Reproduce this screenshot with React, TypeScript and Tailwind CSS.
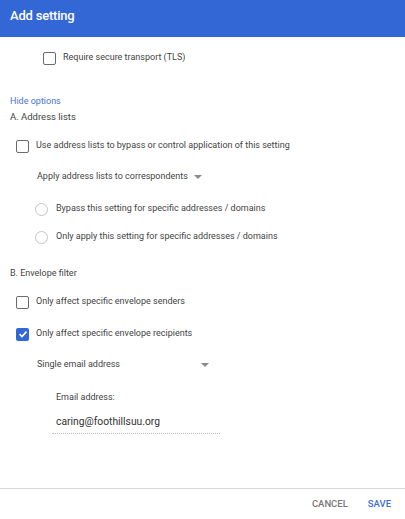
// Add setting dialog
const font = { fontFamily: 'Roboto, "Liberation Sans", Arial, sans-serif' };

function Checkbox({ checked = false }: { checked?: boolean }) {
  if (checked) {
    return (
      <span className="w-[13px] h-[13px] rounded-[2px] bg-[#3367d6] flex items-center justify-center shrink-0">
        <svg width="10" height="10" viewBox="0 0 10 10">
          <path d="M1.6 5.2 L4 7.5 L8.5 2.6" fill="none" stroke="white" strokeWidth="1.6" />
        </svg>
      </span>
    );
  }
  return <span className="w-[13px] h-[13px] rounded-[2px] border-[1.5px] border-[#6b6b6b] shrink-0" />;
}

function Radio() {
  return <span className="w-[13px] h-[13px] rounded-full border-[1.5px] border-[#c4c4c4] shrink-0" />;
}

function Caret() {
  return <span className="w-0 h-0 border-l-[4px] border-r-[4px] border-t-[4px] border-l-transparent border-r-transparent border-t-[#8a8a8a]" />;
}

export default function App() {
  return (
    <div className="w-[405px] h-[519px] bg-white flex flex-col text-[#444] text-[9px]" style={font}>
      <div className="h-[37px] bg-[#3367d6] flex items-center pl-[10px] pb-[6px] shrink-0">
        <span className="text-white text-[13px] font-medium tracking-[-0.2px]">Add setting</span>
      </div>

      <div className="flex-1 flex flex-col">
        <div className="h-[14px] mt-[14px] pl-[43px] flex items-center gap-[7px]">
          <Checkbox />
          <span>Require secure transport (TLS)</span>
        </div>

        <div className="h-[14px] mt-[30px] pl-[10px] flex items-center text-[#4a74d6]">Hide options</div>
        <div className="h-[14px] mt-[1px] pl-[10px] flex items-center text-[9.5px]">A. Address lists</div>

        <div className="h-[14px] mt-[15px] pl-[16px] flex items-center gap-[7px]">
          <Checkbox />
          <span>Use address lists to bypass or control application of this setting</span>
        </div>

        <div className="h-[14px] mt-[17px] pl-[37px] flex items-center gap-[6px]">
          <span>Apply address lists to correspondents</span>
          <Caret />
        </div>

        <div className="h-[14px] mt-[18px] pl-[35px] flex items-center gap-[8px]">
          <Radio />
          <span>Bypass this setting for specific addresses / domains</span>
        </div>
        <div className="h-[14px] mt-[14px] pl-[35px] flex items-center gap-[8px]">
          <Radio />
          <span>Only apply this setting for specific addresses / domains</span>
        </div>

        <div className="h-[14px] mt-[23px] pl-[10px] flex items-center">B. Envelope filter</div>

        <div className="h-[14px] mt-[14px] pl-[16px] flex items-center gap-[7px]">
          <Checkbox />
          <span>Only affect specific envelope senders</span>
        </div>
        <div className="h-[14px] mt-[18px] pl-[16px] flex items-center gap-[7px]">
          <Checkbox checked />
          <span>Only affect specific envelope recipients</span>
        </div>

        <div className="h-[14px] mt-[17px] pl-[37px] flex items-center">
          <div className="w-[172px] flex items-center justify-between">
            <span>Single email address</span>
            <Caret />
          </div>
        </div>

        <div className="h-[14px] mt-[19px] pl-[56px] flex items-center">Email address:</div>

        <div className="ml-[52px] mt-[9px] w-[168px] border-b border-dotted border-[#bbb] pl-[4px] pb-[3px]">
          <span className="text-[10.3px] text-[#333]">caring@foothillsuu.org</span>
        </div>
      </div>

      <div className="h-[31px] border-t border-[#d8d8d8] flex items-center justify-end gap-[20px] pr-[14px] text-[9.5px] font-medium pt-[1px] shrink-0">
        <span className="text-[#777]">CANCEL</span>
        <span className="text-[#3d6fd8]">SAVE</span>
      </div>
    </div>
  );
}
